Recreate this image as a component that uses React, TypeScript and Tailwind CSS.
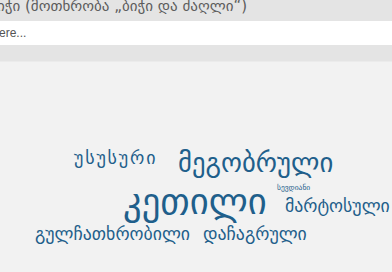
import React from "react";

// word cloud: a free canvas, each word sits at its own spot
const WORDS = [
  { text: "უსუსური", cls: "left-[74px] top-[87px] text-[18px] tracking-[1.8px]" },
  { text: "მეგობრული", cls: "left-[178px] top-[88px] text-[26.7px]" },
  { text: "სევდიანი", cls: "left-[277px] top-[122px] text-[7.5px]" },
  { text: "კეთილი", cls: "left-[123px] top-[122px] text-[36.7px]" },
  { text: "მარტოსული", cls: "left-[285px] top-[135px] text-[17.8px]" },
  { text: "გულჩათხრობილი", cls: "left-[35px] top-[163px] text-[17.8px]" },
  { text: "დაჩაგრული", cls: "left-[203px] top-[163px] text-[17.8px]" },
];

export default function App() {
  return (
    <div className="w-[392px] h-[272px] overflow-hidden bg-[#f2f2f2] flex flex-col font-['DejaVu_Sans',sans-serif]">
      {/* header band with title + search */}
      <div className="h-[62px] shrink-0 bg-[#e4e4e4] border-b border-[#ebebeb] flex flex-col">
        <h1 className="-mt-[1px] flex whitespace-nowrap text-[15px] leading-none text-[#5c5c5c]">
          <span className="w-[25px] shrink-0 overflow-hidden flex justify-end">ბიჭი&nbsp;</span>
          <span>(მოთხრობა „ბიჭი და ძაღლი“)</span>
        </h1>
        <div className="mt-[7px] h-[24px] bg-white flex items-center overflow-hidden">
          <input
            placeholder="Type here..."
            className="-ml-[37px] w-[429px] bg-transparent outline-none text-[12px] font-['Liberation_Sans',sans-serif] text-[#555] placeholder:text-[#555]"
          />
        </div>
      </div>

      <div className="relative flex-1">
        {WORDS.map((w) => (
          <span
            key={w.text}
            className={"absolute whitespace-nowrap leading-none text-[#1f5f8b] " + w.cls}
          >
            {w.text}
          </span>
        ))}
      </div>
    </div>
  );
}
